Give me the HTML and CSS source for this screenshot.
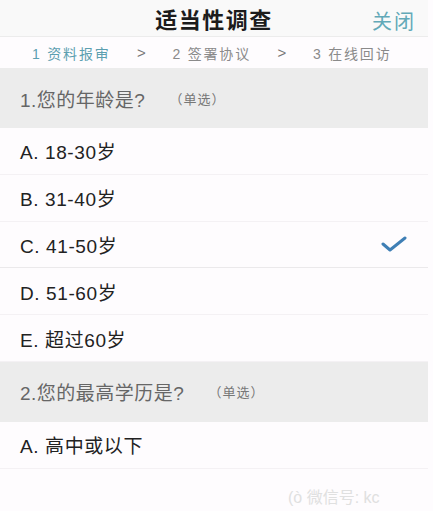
FILE: index.html
```html
<!DOCTYPE html>
<html lang="zh">
<head>
    <meta charset="UTF-8">
    <meta name="viewport" content="width=device-width, initial-scale=1.0">
    <title>适当性调查</title>
    <link rel="stylesheet" href="styles.css">
</head>
<body>
    <div class="page">
        <header class="topbar">
            <h1>适当性调查</h1>
            <a class="close">关闭</a>
        </header>
        <nav class="steps">
            <span class="step active">1 资料报审</span>
            <span class="arrow">&gt;</span>
            <span class="step">2 签署协议</span>
            <span class="arrow">&gt;</span>
            <span class="step">3 在线回访</span>
        </nav>
        <section>
            <div class="question">1.您的年龄是?<span class="kind">（单选）</span></div>
            <div class="option">A. 18-30岁</div>
            <div class="option">B. 31-40岁</div>
            <div class="option checked">C. 41-50岁
                <svg class="tick" width="26" height="18" viewBox="0 0 26 18"><path d="M2 9 L9 15 L24 3" fill="none" stroke="#3f7fb5" stroke-width="3" stroke-linecap="round" stroke-linejoin="round"/></svg>
            </div>
            <div class="option">D. 51-60岁</div>
            <div class="option">E. 超过60岁</div>
        </section>
        <section>
            <div class="question">2.您的最高学历是?<span class="kind">（单选）</span></div>
            <div class="option">A. 高中或以下</div>
        </section>
    </div>
    <div class="mark">(ò 微信号: kc</div>
</body>
</html>
```

FILE: styles.css
```css
*{
    box-sizing: border-box;
}
body{
    margin: 0;
    width: 433px;
    height: 511px;
    overflow: hidden;
    background-color: #fefcfe;
    font-family: 'Liberation Sans', 'Noto Sans CJK SC', sans-serif;
    position: relative;
}
.page{width: 428px;}
.topbar{
    height: 37px;
    display: flex;
    align-items: center;
    justify-content: center;
    position: relative;
    background-color: #f9f9f9;
    border-bottom: 1px solid #ececec;
}
h1{
    margin: 0;
    font-size: 22px;
    letter-spacing: 1.5px;
    font-weight: bold;
    color: #1c1c1c;
}
.close{
    position: absolute;
    right: 12px;
    top: 6px;
    font-size: 20px;
    letter-spacing: 2px;
    color: #62a9b8;
}
.steps{
    height: 31px;
    display: flex;
    align-items: center;
    padding-left: 32px;
    font-size: 14px;
    color: #8a8a8a;
    background-color: #fefcfe;
}
.step{letter-spacing: 1.8px;}
.step.active{color: #5c9fb0;}
.arrow{
    width: 62px;
    text-align: center;
    color: #777;
    font-size: 15px;
}
.question{
    height: 60px;
    display: flex;
    align-items: center;
    padding-left: 20px;
    background-color: #ececec;
    font-size: 19px;
    letter-spacing: 0.5px;
    color: #666;
}
.kind{
    font-size: 13px;
    color: #777;
    margin-left: 24px;
    letter-spacing: 1px;
}
.option{
    height: 46.8px;
    display: flex;
    align-items: center;
    justify-content: space-between;
    padding: 0 21px 0 20px;
    font-size: 19px;
    letter-spacing: 0.6px;
    color: #222;
    border-bottom: 1px solid #f4f1f4;
}
.option.checked{border-bottom-color: #ebe9eb;}
.tick{display: block;}
.mark{
    position: absolute;
    left: 288px;
    top: 488px;
    font-size: 16px;
    line-height: 20px;
    color: #e0e0e0;
    white-space: nowrap;
}
```
